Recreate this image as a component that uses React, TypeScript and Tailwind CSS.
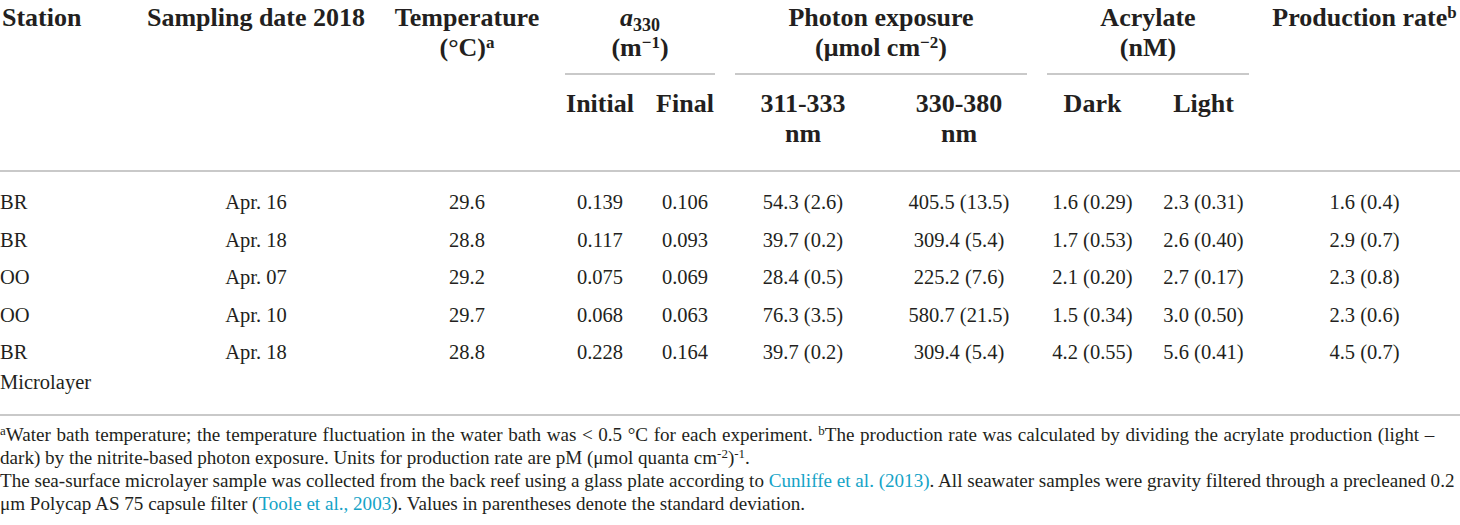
import React from "react";

const COLS =
  "grid grid-cols-[133px_246px_176px_90px_80px_156px_156px_111px_111px_201px]";

const ROWS: string[][] = [
  ["BR", "Apr. 16", "29.6", "0.139", "0.106", "54.3 (2.6)", "405.5 (13.5)", "1.6 (0.29)", "2.3 (0.31)", "1.6 (0.4)"],
  ["BR", "Apr. 18", "28.8", "0.117", "0.093", "39.7 (0.2)", "309.4 (5.4)", "1.7 (0.53)", "2.6 (0.40)", "2.9 (0.7)"],
  ["OO", "Apr. 07", "29.2", "0.075", "0.069", "28.4 (0.5)", "225.2 (7.6)", "2.1 (0.20)", "2.7 (0.17)", "2.3 (0.8)"],
  ["OO", "Apr. 10", "29.7", "0.068", "0.063", "76.3 (3.5)", "580.7 (21.5)", "1.5 (0.34)", "3.0 (0.50)", "2.3 (0.6)"],
  ["BR|Microlayer", "Apr. 18", "28.8", "0.228", "0.164", "39.7 (0.2)", "309.4 (5.4)", "4.2 (0.55)", "5.6 (0.41)", "4.5 (0.7)"],
];

function Rule() {
  return <div className="h-[2px] bg-[#c9c9c9]" />;
}

export default function App() {
  return (
    <div
      className="w-[1460px] h-[525px] overflow-hidden bg-white text-[#231f20]"
      style={{ fontFamily: '"Liberation Serif", "Times New Roman", serif' }}
    >
      {/* Header */}
      <div className={`${COLS} text-[26px] font-bold leading-[30px] pt-[3px] pb-[21px]`}>
        <div className="row-span-2 pl-[2px]">Station</div>
        <div className="row-span-2 text-center whitespace-nowrap">Sampling date 2018</div>
        <div className="row-span-2 text-center">
          Temperature
          <br />
          (°C)<sup className="text-[17px]">a</sup>
        </div>
        <div className="col-span-2 px-[10px]">
          <div className="text-center">
            <i>a</i>
            <sub className="text-[18px]">330</sub>
            <br />
            (m<sup className="text-[17px]">−1</sup>)
          </div>
          <div className="mt-[10px]">
            <Rule />
          </div>
        </div>
        <div className="col-span-2 px-[10px]">
          <div className="text-center">
            Photon exposure
            <br />
            (μmol cm<sup className="text-[17px]">−2</sup>)
          </div>
          <div className="mt-[10px]">
            <Rule />
          </div>
        </div>
        <div className="col-span-2 px-[10px]">
          <div className="text-center">
            Acrylate
            <br />
            (nM)
          </div>
          <div className="mt-[10px]">
            <Rule />
          </div>
        </div>
        <div className="row-span-2 text-center pl-[10px] whitespace-nowrap">
          Production rate<sup className="text-[17px]">b</sup>
        </div>

        <div className="text-center pt-[14px]">Initial</div>
        <div className="text-center pt-[14px]">Final</div>
        <div className="text-center pt-[14px]">
          311-333
          <br />
          nm
        </div>
        <div className="text-center pt-[14px]">
          330-380
          <br />
          nm
        </div>
        <div className="text-center pt-[14px]">Dark</div>
        <div className="text-center pt-[14px]">Light</div>
      </div>
      <Rule />

      {/* Body */}
      <div className={`${COLS} text-[20.5px] leading-[30px] pt-[15px] pb-[9.5px]`}>
        {ROWS.map((r, ri) =>
          r.map((c, ci) => (
            <div
              key={`${ri}-${ci}`}
              className={
                ci === 0
                  ? "pb-[7.5px]"
                  : ci === 9
                  ? "pb-[7.5px] pl-[10px] text-center"
                  : "pb-[7.5px] text-center"
              }
            >
              {c.split("|").map((p, pi) => (
                <div key={pi}>{p}</div>
              ))}
            </div>
          ))
        )}
      </div>
      <Rule />

      {/* Footnotes */}
      <div className="pt-[7px] text-[19.1px] leading-[23px] whitespace-nowrap">
        <div className="[word-spacing:0.8px]">
          <sup className="text-[13px]">a</sup>Water bath temperature; the temperature fluctuation in the water bath was &lt; 0.5 °C for each experiment.{" "}
          <sup className="text-[13px]">b</sup>The production rate was calculated by dividing the acrylate production (light –
        </div>
        <div>
          dark) by the nitrite-based photon exposure. Units for production rate are pM (μmol quanta cm<sup className="text-[13px]">-2</sup>)<sup className="text-[13px]">-1</sup>.
        </div>
        <div>
          The sea-surface microlayer sample was collected from the back reef using a glass plate according to{" "}
          <span className="text-[#14a3c7]">Cunliffe et al. (2013)</span>. All seawater samples were gravity filtered through a precleaned 0.2
        </div>
        <div>
          μm Polycap AS 75 capsule filter (<span className="text-[#14a3c7]">Toole et al., 2003</span>). Values in parentheses denote the standard deviation.
        </div>
      </div>
    </div>
  );
}
